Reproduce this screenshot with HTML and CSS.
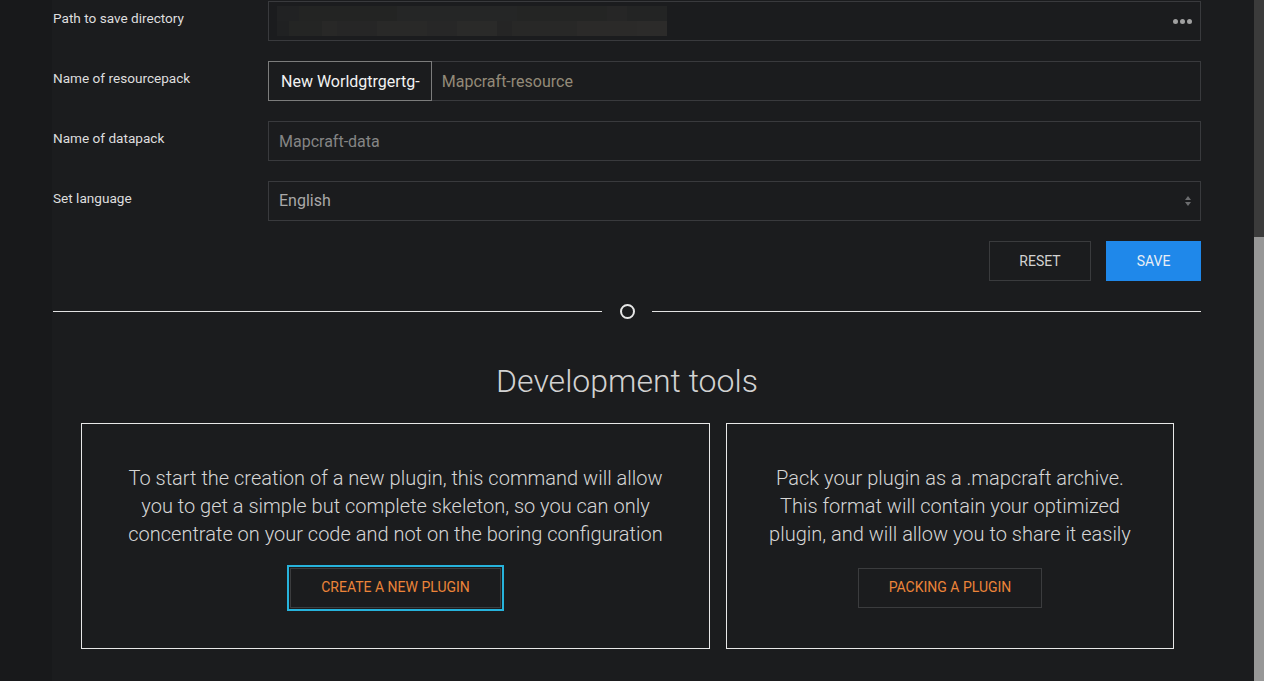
FILE: index.html
```html
<!DOCTYPE html>
<html lang="en">
<head>
<meta charset="utf-8">
<title>Settings</title>
<link rel="stylesheet" href="styles.css">
</head>
<body>
<div class="app">
  <div class="gutter"></div>
  <main class="content">
    <section class="form">
      <div class="row">
        <label class="label">Path to save directory</label>
        <div class="field path-field">
          <div class="blur"><div class="blur-top"></div><div class="blur-bottom"></div></div>
          <div class="dots"><span></span><span></span><span></span></div>
        </div>
      </div>
      <div class="row">
        <label class="label">Name of resourcepack</label>
        <div class="group">
          <div class="prefix">New Worldgtrgertg-</div>
          <div class="field grow"><span class="placeholder tan">Mapcraft-resource</span></div>
        </div>
      </div>
      <div class="row">
        <label class="label">Name of datapack</label>
        <div class="field"><span class="placeholder">Mapcraft-data</span></div>
      </div>
      <div class="row">
        <label class="label">Set language</label>
        <div class="field select">
          <span class="value">English</span>
          <span class="arrows"><span class="up"></span><span class="down"></span></span>
        </div>
      </div>
      <div class="actions">
        <button class="btn btn-outline">RESET</button>
        <button class="btn btn-primary">SAVE</button>
      </div>
    </section>

    <div class="divider">
      <span class="line"></span>
      <span class="ring"></span>
      <span class="line"></span>
    </div>

    <h2 class="title">Development tools</h2>

    <section class="cards">
      <div class="card card-wide">
        <p>To start the creation of a new plugin, this command will allow<br>you to get a simple but complete skeleton, so you can only<br>concentrate on your code and not on the boring configuration</p>
        <button class="btn btn-tool focused">CREATE A NEW PLUGIN</button>
      </div>
      <div class="card card-narrow">
        <p>Pack your plugin as a .mapcraft archive.<br>This format will contain your optimized<br>plugin, and will allow you to share it easily</p>
        <button class="btn btn-tool">PACKING A PLUGIN</button>
      </div>
    </section>
  </main>
  <div class="scrollbar"><div class="thumb"></div></div>
</div>
</body>
</html>
```

FILE: styles.css
```css
* { box-sizing: border-box; }
html, body {
  margin: 0;
  padding: 0;
  height: 100%;
  overflow: hidden;
}
body {
  background: #1b1c1e;
  font-family: Roboto, "Liberation Sans", sans-serif;
  color: #dcdcdc;
}
.app {
  display: flex;
  height: 681px;
}
.gutter {
  width: 52px;
  flex: none;
  background: #18191b;
}
.content {
  width: 1149px;
  flex: none;
  padding-top: 1px;
}
.scrollbar {
  width: 10px;
  margin-left: 53px;
  flex: none;
  background: #3b3b3b;
  display: flex;
  flex-direction: column;
  justify-content: flex-end;
}
.thumb {
  height: 444px;
  background: #979797;
}

/* form */
.form {
  display: flex;
  flex-direction: column;
  gap: 20px;
  padding-left: 1px;
}
.row {
  display: grid;
  grid-template-columns: 215px 933px;
  height: 40px;
}
.label {
  font-size: 13.6px;
  line-height: 16px;
  padding-top: 9px;
  color: #dedede;
}
.field {
  height: 40px;
  border: 1px solid #393a3d;
  display: flex;
  align-items: center;
  padding: 0 10px;
  font-size: 16px;
  position: relative;
}
.placeholder { color: #858585; }
.placeholder.tan { color: #938a78; }
.path-field { padding-left: 8px; }
.blur {
  width: 390px;
  height: 30px;
  display: flex;
  flex-direction: column;
}
.blur-top {
  height: 15px;
  background: linear-gradient(to right,
    #212223 0 22px, #232423 22px 120px, #252626 120px 240px,
    #242524 240px 330px, #262626 330px 350px, #232424 350px 390px);
}
.blur-bottom {
  height: 15px;
  background: linear-gradient(to right,
    #202122 0 12px, #242524 12px 45px, #282827 45px 60px, #262626 60px 100px,
    #292928 100px 150px, #272727 150px 180px, #2a2a29 180px 220px,
    #252525 220px 235px, #282827 235px 300px, #2b2a29 300px 360px, #2c2b2a 360px 390px);
}
.dots {
  margin-left: auto;
  display: flex;
  gap: 2px;
  margin-right: -2px;
}
.dots span {
  width: 5px;
  height: 5px;
  border-radius: 50%;
  background: #a0a0a0;
}
.group {
  display: flex;
  height: 40px;
}
.prefix {
  height: 40px;
  border: 1px solid #7c7c7c;
  padding: 0 11px 0 12px;
  display: flex;
  align-items: center;
  font-size: 16px;
  color: #f2f2f2;
  flex: none;
}
.grow {
  flex: 1;
  border-left: none;
}
.select .value { color: #a9a9a9; margin-top: -1px; }
.arrows {
  margin-left: auto;
  display: flex;
  flex-direction: column;
  gap: 2px;
  margin-right: -1px;
}
.arrows .up {
  width: 0; height: 0;
  border-left: 3.5px solid transparent;
  border-right: 3.5px solid transparent;
  border-bottom: 4px solid #6c6d6f;
}
.arrows .down {
  width: 0; height: 0;
  border-left: 3.5px solid transparent;
  border-right: 3.5px solid transparent;
  border-top: 4px solid #6c6d6f;
}

.actions {
  display: flex;
  justify-content: flex-end;
  gap: 15px;
}
.btn {
  font-family: Roboto, "Liberation Sans", sans-serif;
  font-size: 14px;
  height: 40px;
  background: transparent;
  cursor: pointer;
  padding-bottom: 2px;
}
.btn-outline {
  width: 102px;
  border: 1px solid #3a3b3d;
  color: #d2d2d2;
}
.btn-primary {
  width: 95px;
  border: none;
  background: #1f88ea;
  color: #e8eef5;
}

/* divider */
.divider {
  display: flex;
  align-items: center;
  margin-top: 23px;
  height: 15px;
  padding-left: 1px;
}
.divider .line {
  flex: 1;
  height: 1px;
  background: #e2e2e2;
}
.ring {
  width: 15px;
  height: 15px;
  border: 2px solid #e6e6e6;
  border-radius: 50%;
  margin: 0 17px 0 18px;
}

.title {
  margin: 44px 0 0;
  text-align: center;
  font-weight: 300;
  font-size: 32px;
  line-height: 36px;
  color: #d2d2d2;
  padding-left: 1px;
}

/* cards */
.cards {
  display: flex;
  justify-content: center;
  gap: 16px;
  margin-top: 24px;
  padding-left: 2px;
}
.card {
  border: 1px solid #e8e8e8;
  height: 226px;
  padding: 40px 0 0;
  display: flex;
  flex-direction: column;
  align-items: center;
}
.card-wide { width: 629px; }
.card-narrow { width: 448px; }
.card p {
  margin: 0;
  font-size: 20px;
  font-weight: 300;
  line-height: 28px;
  text-align: center;
  color: #d6d6d6;
}
.btn-tool {
  margin-top: 20px;
  border: 1px solid #3b3c3e;
  color: #ec8439;
  padding: 0 30px 2px;
}
.focused {
  outline: 2px solid #27b3dc;
  outline-offset: 1px;
}
```
